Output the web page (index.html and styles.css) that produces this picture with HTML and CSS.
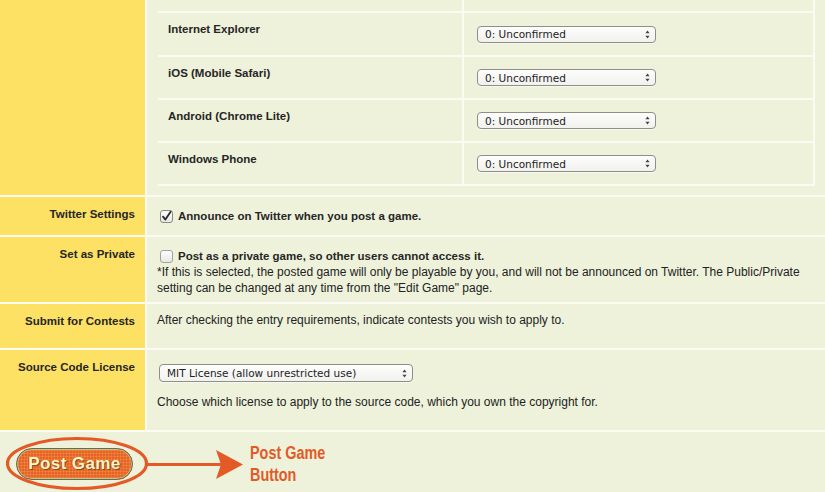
FILE: index.html
```html
<!DOCTYPE html>
<html>
<head>
<meta charset="utf-8">
<title>Post Game</title>
<link rel="stylesheet" href="styles.css">
</head>
<body>
<div class="form">
  <div class="row">
    <div class="label"></div>
    <div class="field compat-field">
      <div class="compat">
        <div class="crow stub"><div class="cname"></div><div class="cval"></div></div>
        <div class="crow first">
          <div class="cname">Internet Explorer</div>
          <div class="cval"><div class="select sel-compat"><span>0: Unconfirmed</span><svg class="updown" width="5" height="9" viewBox="0 0 5 9"><path d="M2.5 0.5 L4.6 3.3 H0.4 Z M2.5 8.5 L4.6 5.7 H0.4 Z" fill="#444"/></svg></div></div>
        </div>
        <div class="crow">
          <div class="cname">iOS (Mobile Safari)</div>
          <div class="cval"><div class="select sel-compat"><span>0: Unconfirmed</span><svg class="updown" width="5" height="9" viewBox="0 0 5 9"><path d="M2.5 0.5 L4.6 3.3 H0.4 Z M2.5 8.5 L4.6 5.7 H0.4 Z" fill="#444"/></svg></div></div>
        </div>
        <div class="crow">
          <div class="cname">Android (Chrome Lite)</div>
          <div class="cval"><div class="select sel-compat"><span>0: Unconfirmed</span><svg class="updown" width="5" height="9" viewBox="0 0 5 9"><path d="M2.5 0.5 L4.6 3.3 H0.4 Z M2.5 8.5 L4.6 5.7 H0.4 Z" fill="#444"/></svg></div></div>
        </div>
        <div class="crow">
          <div class="cname">Windows Phone</div>
          <div class="cval"><div class="select sel-compat"><span>0: Unconfirmed</span><svg class="updown" width="5" height="9" viewBox="0 0 5 9"><path d="M2.5 0.5 L4.6 3.3 H0.4 Z M2.5 8.5 L4.6 5.7 H0.4 Z" fill="#444"/></svg></div></div>
        </div>
      </div>
    </div>
  </div>

  <div class="row">
    <div class="label">Twitter Settings</div>
    <div class="field twitter-field">
      <div class="check-line">
        <svg class="checkbox" width="13" height="13" viewBox="0 0 13 13"><defs><linearGradient id="cb1" x1="0" y1="0" x2="0" y2="1"><stop offset="0" stop-color="#ffffff"/><stop offset="1" stop-color="#e6e6e2"/></linearGradient></defs><rect x="0.5" y="0.5" width="12" height="12" rx="2.5" fill="url(#cb1)" stroke="#8a8a84"/><path d="M3 6.6 L5.4 9.6 L10.6 1.8" fill="none" stroke="#2a2a2a" stroke-width="1.8" stroke-linecap="round" stroke-linejoin="round"/></svg>
        <b>Announce on Twitter when you post a game.</b>
      </div>
    </div>
  </div>

  <div class="row">
    <div class="label">Set as Private</div>
    <div class="field private-field">
      <div class="check-line">
        <svg class="checkbox" width="13" height="13" viewBox="0 0 13 13"><defs><linearGradient id="cb2" x1="0" y1="0" x2="0" y2="1"><stop offset="0" stop-color="#ffffff"/><stop offset="1" stop-color="#e6e6e2"/></linearGradient></defs><rect x="0.5" y="0.5" width="12" height="12" rx="2.5" fill="url(#cb2)" stroke="#a2a29c"/></svg>
        <b>Post as a private game, so other users cannot access it.</b>
      </div>
      <p class="note">*If this is selected, the posted game will only be playable by you, and will not be announced on Twitter. The Public/Private setting can be changed at any time from the "Edit Game" page.</p>
    </div>
  </div>

  <div class="row">
    <div class="label">Submit for Contests</div>
    <div class="field contests-field">After checking the entry requirements, indicate contests you wish to apply to.</div>
  </div>

  <div class="row">
    <div class="label">Source Code License</div>
    <div class="field license-field">
      <div class="select sel-license"><span>MIT License (allow unrestricted use)</span><svg class="updown" width="5" height="9" viewBox="0 0 5 9"><path d="M2.5 0.5 L4.6 3.3 H0.4 Z M2.5 8.5 L4.6 5.7 H0.4 Z" fill="#444"/></svg></div>
      <p class="license-note">Choose which license to apply to the source code, which you own the copyright for.</p>
    </div>
  </div>
</div>

<div class="footer">
  <div class="btn-wrap">
    <button class="post-btn" type="button">Post Game</button>
    <svg class="ring" width="144" height="55" viewBox="0 0 144 55"><ellipse cx="72" cy="27.5" rx="69.5" ry="25" fill="none" stroke="#e35a27" stroke-width="3.2"/></svg>
  </div>
  <svg class="arrow" width="96" height="31" viewBox="0 0 96 31"><path d="M0 15.5 H74" stroke="#e35a27" stroke-width="3.2"/><path d="M69 1 L96 15.5 L69 30 L74 15.5 Z" fill="#e35a27"/></svg>
  <div class="callout">Post Game<br>Button</div>
</div>
</body>
</html>
```

FILE: styles.css
```css
html, body {
  margin: 0;
  padding: 0;
  background: #eef2db;
}

body {
  font-family: "Liberation Sans", Arial, sans-serif;
  font-size: 12px;
  color: #222;
  width: 825px;
  height: 492px;
  overflow: hidden;
}

.form {
  display: flex;
  flex-direction: column;
  gap: 2px;
  background: #fbfbf3;
  padding-bottom: 2px;
}

.row {
  display: flex;
  gap: 2px;
}

.label {
  flex: none;
  width: 145px;
  box-sizing: border-box;
  background: #fce164;
  text-align: right;
  padding: 9px 10px 0 0;
  font-weight: bold;
  font-size: 11.5px;
  line-height: 16px;
  color: #262626;
}

.field {
  flex: 1;
  background: #eef2db;
  line-height: 16px;
}

/* compatibility table */
.compat-field {
  padding: 0 10px 9px 11px;
}

.compat {
  border-right: 2px solid #fbfbf3;
}

.crow {
  display: flex;
  box-sizing: border-box;
  height: 43px;
  border-bottom: 2px solid #fbfbf3;
}

.crow.stub {
  height: 13px;
}

.crow.first {
  height: 44px;
}

.cname {
  flex: none;
  width: 306px;
  box-sizing: border-box;
  border-right: 2px solid #fbfbf3;
  padding: 8px 10px 0;
  font-weight: bold;
  font-size: 11.5px;
  line-height: 16px;
  color: #262626;
}

.cval {
  flex: 1;
  display: flex;
  align-items: center;
  padding-left: 13px;
}

/* select */
.select {
  display: flex;
  align-items: center;
  justify-content: space-between;
  box-sizing: border-box;
  border: 1px solid #8f8f88;
  border-radius: 4px;
  background: linear-gradient(#fdfdfc, #f1f1ee);
  box-shadow: 0 1px 0 rgba(255, 255, 255, 0.6);
  padding: 0 5px 0 7px;
  font-family: "DejaVu Sans", sans-serif;
  font-size: 10.5px;
  color: #222;
}

.sel-compat {
  width: 179px;
  height: 17px;
}

.sel-license {
  width: 254px;
  height: 18px;
  margin-left: 2px;
}

.updown {
  flex: none;
}

/* checkbox rows */
.check-line {
  display: flex;
  align-items: center;
  gap: 5px;
  padding-left: 3px;
}

.check-line b {
  font-size: 11.5px;
  color: #262626;
}

.checkbox {
  flex: none;
}

.twitter-field {
  padding: 11px 10px 11px 10px;
}

.private-field {
  padding: 11px 20px 6px 10px;
}

.note {
  margin: 0;
}

.contests-field {
  padding: 8px 10px 20px 10px;
}

.license-field {
  padding: 14px 10px 20px 10px;
}

.license-note {
  margin: 12px 0 0;
}

/* footer with annotation */
.footer {
  display: flex;
  align-items: center;
  box-sizing: border-box;
  height: 60px;
  padding: 4px 0 0 16px;
}

.btn-wrap {
  position: relative;
  flex: none;
}

.post-btn {
  display: block;
  width: 117px;
  height: 32px;
  margin: 0;
  padding: 0;
  border: 1px solid #6b6a58;
  border-radius: 16px;
  background: radial-gradient(circle, #f08a3a 0.8px, #e5632a 1.2px) 0 0 / 3px 3px, #e5632a;
  box-shadow: inset 0 0 0 1px #c9c27a;
  font-family: "Liberation Sans", Arial, sans-serif;
  font-weight: bold;
  font-size: 17px;
  letter-spacing: 0.4px;
  color: #fff4c4;
  text-shadow: 1px 1px 0 #8c4a1e, -1px 0 0 #b8561f;
  cursor: pointer;
}

.ring {
  position: absolute;
  left: -11px;
  top: -12px;
  pointer-events: none;
}

.arrow {
  flex: none;
  margin-left: 14px;
}

.callout {
  margin-left: 7px;
  font-family: "Liberation Sans", Arial, sans-serif;
  font-weight: bold;
  font-size: 18px;
  line-height: 22px;
  color: #e35a27;
  transform: scaleX(0.8);
  transform-origin: left center;
}
```
